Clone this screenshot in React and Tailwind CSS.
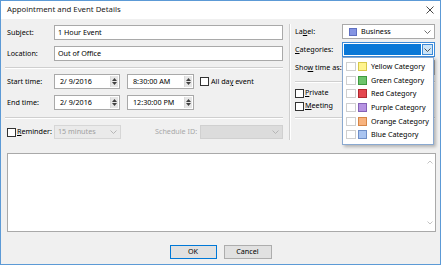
import React from "react";

const Chevron = ({ color = "#606060", className = "" }) => (
  <svg width="7" height="4" viewBox="0 0 7 4" className={className}>
    <path d="M0.5 0.5 L3.5 3.5 L6.5 0.5" fill="none" stroke={color} strokeWidth="0.9" />
  </svg>
);

const Spinner = () => (
  <div className="w-[8px] h-full flex flex-col items-center justify-center gap-[1px] bg-[#e6e6e6] border-l border-[#dadada]">
    <svg width="5" height="3" viewBox="0 0 5 3"><path d="M0 3 L2.5 0 L5 3 Z" fill="#404040" /></svg>
    <svg width="5" height="3" viewBox="0 0 5 3"><path d="M0 0 L2.5 3 L5 0 Z" fill="#404040" /></svg>
  </div>
);

const Check = () => <div className="w-[9px] h-[9px] border border-[#333] bg-white shrink-0" />;

const Etched = ({ className = "" }) => (
  <div className={"h-[2px] border-t border-[#cfcfcf] border-b border-b-white " + className} />
);

const TextBox = ({ children, className = "" }) => (
  <div className={"h-full bg-white border border-[#a9a9a9] flex items-center pl-[3px] " + className}>{children}</div>
);

const SpinBox = ({ value, w }) => (
  <div className={"h-full bg-white border border-[#a9a9a9] flex items-center pl-[5px] pr-[1px] py-[1px] " + w}>
    <span className="flex-1">{value}</span>
    <Spinner />
  </div>
);

const cats = [
  ["Yellow Category", "#fff48e", "#d6c84a"],
  ["Green Category", "#6cc46c", "#3f9a3f"],
  ["Red Category", "#e5474f", "#b02a30"],
  ["Purple Category", "#b593e2", "#8461b6"],
  ["Orange Category", "#f8b37e", "#d58648"],
  ["Blue Category", "#a9c4f0", "#6f8fc8"],
];

export default function App() {
  return (
    <div className="w-[441px] h-[265px] border border-[#5c9ad6] bg-[#f0f0f0] flex flex-col overflow-hidden font-['Segoe_UI','Noto_Sans',sans-serif] text-[7.2px] leading-none text-black">
      {/* title bar */}
      <div className="h-[18px] bg-white flex items-center pl-[6px] pr-[6px] shrink-0">
        <span className="flex-1 text-[7.8px] text-[#1a1a1a]">Appointment and Event Details</span>
        <svg width="8" height="8" viewBox="0 0 8 8">
          <path d="M0.5 0.5 L7.5 7.5 M7.5 0.5 L0.5 7.5" stroke="#333" strokeWidth="0.9" />
        </svg>
      </div>

      <div className="relative flex-1 flex flex-col pl-[6px] pr-[4px]">
        <div className="flex">
          {/* left column */}
          <div className="w-[276px] flex flex-col">
            <div className="mt-[6px] h-[15px] flex items-center">
              <span className="w-[47px]">Subject:</span>
              <TextBox className="flex-1">1 Hour Event</TextBox>
            </div>
            <div className="mt-[6px] h-[15px] flex items-center">
              <span className="w-[47px]">Location:</span>
              <TextBox className="flex-1">Out of Office</TextBox>
            </div>
            <Etched className="mt-[6px] -ml-[2px]" />
            <div className="mt-[5px] h-[15px] flex items-center">
              <span className="w-[47px]">Start time:</span>
              <SpinBox value="2/  9/2016" w="w-[66px]" />
              <div className="w-[7px]" />
              <SpinBox value="8:30:00 AM" w="w-[67px]" />
              <div className="ml-[6px] flex items-center gap-[2px]">
                <Check />
                <span>All da<u>y</u> event</span>
              </div>
            </div>
            <div className="mt-[6px] h-[15px] flex items-center">
              <span className="w-[47px]">End time:</span>
              <SpinBox value="2/  9/2016" w="w-[66px]" />
              <div className="w-[7px]" />
              <SpinBox value="12:30:00 PM" w="w-[67px]" />
            </div>
            <Etched className="mt-[7px] -ml-[2px]" />
            <div className="mt-[6px] h-[14px] flex items-center">
              <div className="w-[47px] flex items-center gap-[1px]">
                <Check />
                <span><u>R</u>eminder:</span>
              </div>
              <div className="w-[67px] h-full bg-[#eaeaea] border border-[#d6d6d6] flex items-center pl-[3px] pr-[3px] text-[#a0a0a0]">
                <span className="flex-1">15 minutes</span>
                <Chevron color="#b0b0b0" />
              </div>
              <span className="ml-[34px] w-[45px] text-[#a8a8a8]">Schedule ID:</span>
              <div className="flex-1 h-full bg-[#dcdcdc] border border-[#d0d0d0] flex items-center justify-end pr-[3px]">
                <Chevron color="#b0b0b0" />
              </div>
            </div>
          </div>

          {/* vertical separator */}
          <div className="ml-[6px] mt-[5px] w-[2px] h-[116px] border-l border-[#cfcfcf] border-r border-r-white" />

          {/* right column */}
          <div className="ml-[4px] w-[140px] flex flex-col">
            <div className="mt-[5px] h-[15px] flex items-center">
              <span className="w-[47px]">La<u>b</u>el:</span>
              <div className="flex-1 h-full bg-white border border-[#a9a9a9] flex items-center pl-[6px] pr-[3px]">
                <div className="w-[8px] h-[8px] bg-[#8494e3] border border-[#5e6fc0]" />
                <span className="ml-[4px] flex-1">Business</span>
                <Chevron />
              </div>
            </div>
            <div className="mt-[3px] h-[15px] flex items-center">
              <span className="w-[47px]"><u>C</u>ategories:</span>
              <div className="flex-1 h-full bg-white border border-[#3c8ad8] flex items-stretch p-[1px]">
                <div className="flex-1 bg-[#0a78d7]" />
                <div className="w-[11px] ml-[1px] bg-[#cce4f7] border border-[#3c8ad8] flex items-center justify-center">
                  <Chevron color="#404040" />
                </div>
              </div>
            </div>
            <div className="mt-[3px] h-[15px] flex items-center">
              <span className="w-[47px]">Sho<u>w</u> time as:</span>
              <div className="flex-1 h-full bg-white border border-[#a9a9a9]" />
            </div>
            <Etched className="mt-[6px]" />
            <div className="mt-[5px] h-[10px] flex items-center gap-[1px]">
              <Check />
              <span><u>P</u>rivate</span>
            </div>
            <div className="mt-[3px] h-[10px] flex items-center gap-[1px]">
              <Check />
              <span><u>M</u>eeting</span>
            </div>
            <Etched className="mt-[6px]" />
          </div>
        </div>

        {/* notes */}
        <div className="mt-[13px] h-[79px] bg-white border border-[#a9a9a9] flex justify-end">
          <div className="w-[10px] flex flex-col items-center justify-between py-[6px]">
            <svg width="6" height="4" viewBox="0 0 6 4"><path d="M0.5 3.5 L3 1 L5.5 3.5" fill="none" stroke="#bdbdbd" strokeWidth="0.9" /></svg>
            <svg width="6" height="4" viewBox="0 0 6 4"><path d="M0.5 0.5 L3 3 L5.5 0.5" fill="none" stroke="#bdbdbd" strokeWidth="0.9" /></svg>
          </div>
        </div>

        {/* buttons */}
        <div className="mt-[13px] h-[14px] flex justify-center gap-[7px] -ml-[2px]">
          <div className="w-[47px] h-full bg-[#e1e1e1] border border-[#0078d7] flex items-center justify-center">OK</div>
          <div className="w-[48px] h-full bg-[#e1e1e1] border border-[#adadad] flex items-center justify-center">Cancel</div>
        </div>

        {/* open categories list */}
        <div className="absolute left-[341px] top-[38px] w-[92px] h-[88px] bg-white border border-[#8aa9d0] shadow-[2px_2px_3px_rgba(0,0,0,0.25)] pt-[2px] flex flex-col">
          {cats.map(([name, fill, stroke]) => (
            <div key={name} className="h-[13.6px] flex items-center pl-[3px]">
              <div className="w-[10px] h-[9px] bg-white border border-[#cfcfcf]" />
              <div className="ml-[2px] w-[9px] h-[9px] border" style={{ background: fill, borderColor: stroke }} />
              <span className="ml-[4px]">{name}</span>
            </div>
          ))}
        </div>
      </div>
    </div>
  );
}
